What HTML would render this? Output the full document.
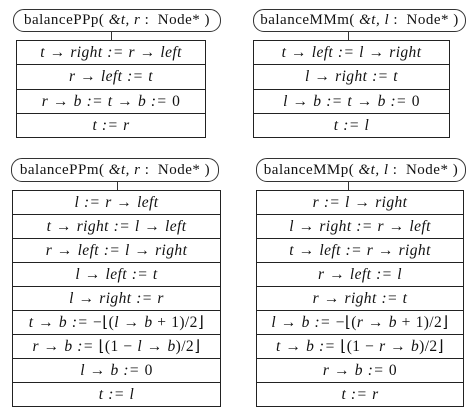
<!DOCTYPE html>
<html><head><meta charset="utf-8"><style>
body{margin:0;width:470px;height:413px;background:#fff;position:relative;overflow:hidden;font-family:"Liberation Serif",serif;color:#111}
.pill{position:absolute;border:1px solid #333;border-radius:11px;box-sizing:border-box;font-size:15px;letter-spacing:0.5px;word-spacing:0px;text-align:center;line-height:21px;white-space:nowrap}
.con{position:absolute;width:1px;background:#333}
.tb{position:absolute;border:1px solid #222;border-bottom:none;box-sizing:border-box}
.tb div{border-bottom:1px solid #222;box-sizing:border-box;text-align:center;font-size:15.5px;font-style:italic;white-space:nowrap;word-spacing:0.5px;letter-spacing:0.4px}
.n{font-style:normal}
</style></head><body>

<div class="pill" style="left:13px;top:9px;width:208px;height:23px">balancePPp( <i>&amp;t, r</i> :&nbsp; Node* )</div>
<div class="con" style="left:111px;top:32px;height:8px"></div>
<div class="tb" style="left:16px;top:40px;width:190px">
<div style="height:24px;line-height:23px">t → right := r → left</div>
<div style="height:25px;line-height:24px">r → left := t</div>
<div style="height:24px;line-height:23px">r → b := t → b := <span class="n">0</span></div>
<div style="height:24px;line-height:23px">t := r</div>
</div>

<div class="pill" style="left:253px;top:9px;width:213px;height:23px">balanceMMm( <i>&amp;t, l</i> :&nbsp; Node* )</div>
<div class="con" style="left:348px;top:32px;height:8px"></div>
<div class="tb" style="left:253px;top:40px;width:197px">
<div style="height:24px;line-height:23px">t → left := l → right</div>
<div style="height:25px;line-height:24px">l → right := t</div>
<div style="height:24px;line-height:23px">l → b := t → b := <span class="n">0</span></div>
<div style="height:24px;line-height:23px">t := l</div>
</div>

<div class="pill" style="left:11px;top:158px;width:208px;height:24px;line-height:22px">balancePPm( <i>&amp;t, r</i> :&nbsp; Node* )</div>
<div class="con" style="left:117px;top:182px;height:8px"></div>
<div class="tb" style="left:12px;top:190px;width:209px">
<div style="height:24px;line-height:23px">l := r → left</div>
<div style="height:24px;line-height:23px">t → right := l → left</div>
<div style="height:24px;line-height:23px">r → left := l → right</div>
<div style="height:24px;line-height:23px">l → left := t</div>
<div style="height:24px;line-height:23px">l → right := r</div>
<div style="height:24px;line-height:23px">t → b := <span class="n">−⌊(</span>l → b <span class="n">+ 1)/2⌋</span></div>
<div style="height:24px;line-height:23px">r → b := <span class="n">⌊(1 −</span> l → b<span class="n">)/2⌋</span></div>
<div style="height:24px;line-height:23px">l → b := <span class="n">0</span></div>
<div style="height:24px;line-height:23px">t := l</div>
</div>

<div class="pill" style="left:256px;top:158px;width:210px;height:24px;line-height:22px">balanceMMp( <i>&amp;t, l</i> :&nbsp; Node* )</div>
<div class="con" style="left:348px;top:182px;height:8px"></div>
<div class="tb" style="left:256px;top:190px;width:208px">
<div style="height:24px;line-height:23px">r := l → right</div>
<div style="height:24px;line-height:23px">l → right := r → left</div>
<div style="height:24px;line-height:23px">t → left := r → right</div>
<div style="height:24px;line-height:23px">r → left := l</div>
<div style="height:24px;line-height:23px">r → right := t</div>
<div style="height:24px;line-height:23px">l → b := <span class="n">−⌊(</span>r → b <span class="n">+ 1)/2⌋</span></div>
<div style="height:24px;line-height:23px">t → b := <span class="n">⌊(1 −</span> r → b<span class="n">)/2⌋</span></div>
<div style="height:24px;line-height:23px">r → b := <span class="n">0</span></div>
<div style="height:24px;line-height:23px">t := r</div>
</div>
</body></html>
